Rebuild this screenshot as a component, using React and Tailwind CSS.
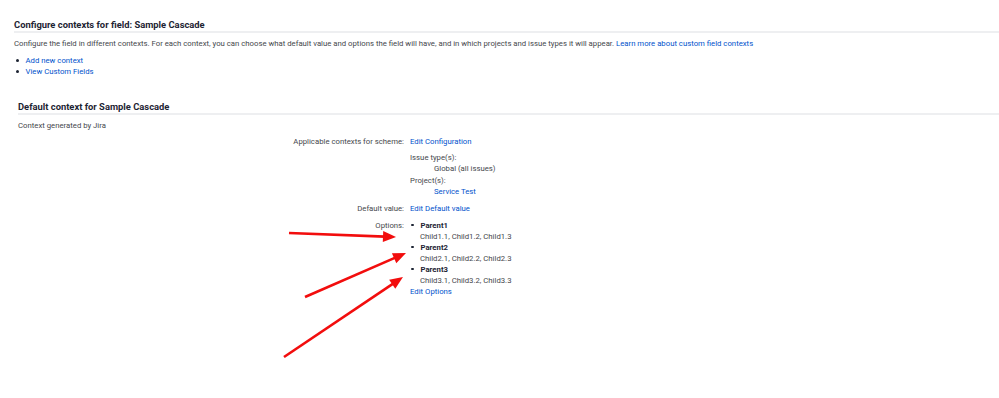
import React from "react";

// flecha roja de anotación
function Arrow({ x1, y1, x2, y2 }) {
  const dx = x2 - x1;
  const dy = y2 - y1;
  const len = Math.hypot(dx, dy);
  const ux = dx / len;
  const uy = dy / len;
  const bx = x2 - ux * 13;
  const by = y2 - uy * 13;
  const px = -uy * 5.5;
  const py = ux * 5.5;
  return (
    <g>
      <line x1={x1} y1={y1} x2={bx + ux * 2} y2={by + uy * 2} stroke="#f20d0d" strokeWidth="2.6" />
      <polygon
        points={`${x2},${y2} ${bx + px},${by + py} ${bx - px},${by - py}`}
        fill="#f20d0d"
      />
    </g>
  );
}

const link = "text-[#0052cc]";

export default function App() {
  const options = [
    { parent: "Parent1", children: "Child1.1, Child1.2, Child1.3" },
    { parent: "Parent2", children: "Child2.1, Child2.2, Child2.3" },
    { parent: "Parent3", children: "Child3.1, Child3.2, Child3.3" },
  ];

  return (
    <div className="relative w-[999px] h-[398px] bg-white overflow-hidden font-['Roboto',sans-serif] text-[7.75px] leading-[11px] text-[#45474c]">
      <div className="pl-[14px]">
        {/* cabecera */}
        <h1 className="pt-[19px] pb-[1px] border-b-2 border-[#eeeff1] text-[9.4px] leading-[11px] font-bold text-[#1d2433]">
          Configure contexts for field: Sample Cascade
        </h1>
        <p className="mt-[5px]">
          Configure the field in different contexts. For each context, you can choose what default value and options the field will have, and in which projects and issue types it will appear.{" "}
          <span className={link}>Learn more about custom field contexts</span>
        </p>
        <ul className="mt-[6px]">
          {["Add new context", "View Custom Fields"].map((t) => (
            <li key={t} className="flex items-center">
              <span className="w-[2.5px] h-[2.5px] rounded-full bg-[#1d2433] ml-[2px] mr-[7px]" />
              <span className={link}>{t}</span>
            </li>
          ))}
        </ul>

        {/* contexto por defecto */}
        <div className="pl-[4px] mt-[24px]">
          <h2 className="pb-[1px] border-b-2 border-[#eeeff1] text-[9.4px] leading-[11px] font-bold text-[#1d2433]">
            Default context for Sample Cascade
          </h2>
          <p className="mt-[5px]">Context generated by Jira</p>

          <div className="grid grid-cols-[386px_1fr] gap-x-[6px] mt-[5px]">
            <div className="text-right">Applicable contexts for scheme:</div>
            <div>
              <div className={link}>Edit Configuration</div>
              <div className="mt-[5px] leading-[11.4px]">
                <div>Issue type(s):</div>
                <div className="pl-[24px]">Global (all issues)</div>
                <div>Project(s):</div>
                <div className={`pl-[24px] ${link}`}>Service Test</div>
              </div>
            </div>

            <div className="text-right mt-[5px]">Default value:</div>
            <div className={`mt-[5px] ${link}`}>Edit Default value</div>

            <div className="text-right mt-[6px]">Options:</div>
            <div className="mt-[6px]">
              <ul>
                {options.map((o) => (
                  <li key={o.parent}>
                    <div className="flex items-center">
                      <span className="w-[2.5px] h-[2.5px] rounded-full bg-[#1d2433] ml-[1px] mr-[7px]" />
                      <span className="font-bold text-[#1d2433]">{o.parent}</span>
                    </div>
                    <div className="pl-[10px]">{o.children}</div>
                  </li>
                ))}
              </ul>
              <div className={link}>Edit Options</div>
            </div>
          </div>
        </div>
      </div>

      {/* flechas de anotación */}
      <svg className="absolute inset-0 pointer-events-none" width="999" height="398">
        <Arrow x1={289} y1={233} x2={396} y2={237} />
        <Arrow x1={305} y1={297} x2={406} y2={253} />
        <Arrow x1={284} y1={357} x2={403} y2={277} />
      </svg>
    </div>
  );
}
